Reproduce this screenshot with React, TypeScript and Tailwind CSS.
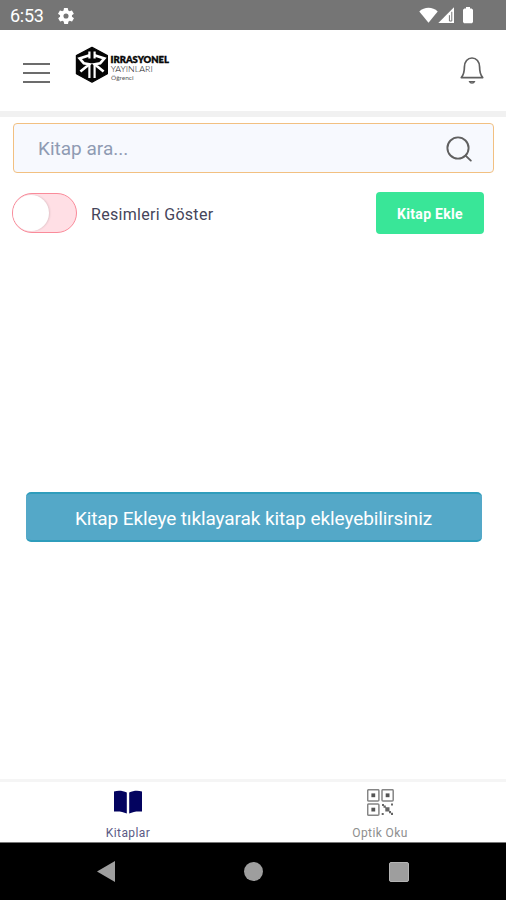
import React from 'react';

const StatusBar = () => {
    return (
        <div className="flex h-[30px] shrink-0 items-center bg-[#757575] text-white">
            <span className="ml-[10px] mt-[2px] w-[48px] text-[18px] leading-none tracking-[-0.3px]">6:53</span>
            <svg width="16" height="16" viewBox="2 2 20 20" className="mt-px" fill="#fff">
                <path d="M19.4 13a7.5 7.5 0 0 0 0-2l2.1-1.6c.2-.2.2-.4.1-.6l-2-3.5c-.1-.2-.4-.3-.6-.2l-2.5 1a7 7 0 0 0-1.7-1l-.4-2.6a.5.5 0 0 0-.5-.5h-4a.5.5 0 0 0-.5.4l-.4 2.7a7 7 0 0 0-1.7 1l-2.5-1c-.2-.1-.5 0-.6.2l-2 3.5c-.1.2-.1.5.1.6L4.6 11a7.5 7.5 0 0 0 0 2l-2.1 1.6c-.2.2-.2.4-.1.6l2 3.5c.1.2.4.3.6.2l2.5-1a7 7 0 0 0 1.7 1l.4 2.6c0 .3.2.5.5.5h4c.2 0 .5-.2.5-.4l.4-2.7a7 7 0 0 0 1.7-1l2.5 1c.2.1.5 0 .6-.2l2-3.5c.1-.2.1-.5-.1-.6zM12 15.2a3.2 3.2 0 1 1 0-6.4 3.2 3.2 0 0 1 0 6.4z" />
            </svg>
            <div className="ml-auto mr-[33px] flex items-center">
                <svg width="19" height="17" viewBox="0 0 19 17" fill="#fff">
                    <path d="M0.3 4.4C5.2-.5 13.8-.5 18.7 4.4L9.5 15.7z" />
                </svg>
                <svg width="17" height="17" viewBox="0 0 17 17">
                    <path d="M16 0.3V16H0.3z" fill="#fff" />
                    <path d="M11.4 8.2v5.8h2.4V4.8" stroke="#757575" strokeWidth="1" fill="none" />
                </svg>
                <svg width="10" height="17" viewBox="0 0 10 17" className="ml-[8px]" fill="#fff">
                    <path d="M3 0h4v1.4h1.6L10 2.8V15L9 16.2H1L0 15V2.8l1.4-1.4H3z" />
                </svg>
            </div>
        </div>
    );
};

const Logo = () => {
    return (
        <svg width="96" height="38" viewBox="0 0 96 38">
            <path d="M17 1.3 32.4 9.6V27.8L17 36.2 1.4 27.8V9.6z" fill="#050505" stroke="#050505" strokeWidth="1.2" strokeLinejoin="round" />
            <g fill="none" stroke="#fff" strokeWidth="2.6">
                <path d="M14.6 9.2 4.6 12.4 8.8 17.2 14.4 18.2 5.4 25.6" />
                <path d="M19.4 9.2 29.4 12.4 25.2 17.2 19.6 18.2 28.6 25.6" />
            </g>
            <path d="M14.4 5.5v7M19.6 5.5v7M14.4 18v14M19.6 18v14" stroke="#fff" strokeWidth="2.2" />
            <text x="35.5" y="17.2" fontSize="8.4" fontWeight="800" fontFamily="Lato" fill="#080808" stroke="#080808" strokeWidth="0.3" textLength="58.5" lengthAdjust="spacingAndGlyphs">IRRASYONEL</text>
            <text x="35.7" y="26" fontSize="7.4" fontWeight="300" fontFamily="Lato" fill="#222" textLength="42" lengthAdjust="spacingAndGlyphs">YAYINLARI</text>
            <text x="36" y="34" fontSize="6" fontFamily="Lato" fill="#555" textLength="22.5" lengthAdjust="spacingAndGlyphs">Öğrenci</text>
        </svg>
    );
};

const Header = () => {
    return (
        <header className="flex h-[87px] shrink-0 items-start border-b-[6px] border-[#f1f1f1] bg-white">
            <button className="ml-[23px] mt-[33px] flex w-[27px] flex-col gap-[7px]">
                <span className="h-[2px] w-full bg-[#6c6c6c]" />
                <span className="h-[2px] w-full bg-[#6c6c6c]" />
                <span className="h-[2px] w-full bg-[#6c6c6c]" />
            </button>
            <div className="ml-[25px] mt-[16px]">
                <Logo />
            </div>
            <svg width="26" height="29" viewBox="0 0 26 29" className="ml-auto mr-[21px] mt-[26px]" fill="none" stroke="#606060" strokeWidth="1.7">
                <path d="M2.3 21.6C5 18.5 5.4 15.5 5.4 11 5.4 5.5 8.6 2 13 2s7.6 3.5 7.6 9c0 4.5.4 7.5 3.1 10.6z" strokeLinejoin="round" />
                <path d="M10.4 25.6c.7 2 4.5 2 5.2 0z" strokeWidth="1.1" />
            </svg>
        </header>
    );
};

const Toggle = () => {
    return (
        <div className="flex h-[40px] w-[65px] items-center rounded-full border-[1.5px] border-[#fa8b9a] bg-[#ffdfe5]">
            <div className="size-[36px] rounded-full bg-white shadow-[1px_0_2px_rgba(0,0,0,0.12)]" />
        </div>
    );
};

const finders = [
    [0.7, 0.7],
    [15, 0.7],
    [0.7, 15],
];

const QrIcon = () => {
    return (
        <svg width="27" height="27" viewBox="0 0 27 27">
            {finders.map(([x, y]) => (
                <g key={`${x}-${y}`}>
                    <rect x={x} y={y} width="11.2" height="11.2" rx="1" fill="none" stroke="#858585" strokeWidth="1.5" />
                    <rect x={x + 3.7} y={y + 3.7} width="3.8" height="3.8" fill="#555" />
                </g>
            ))}
            <path d="M18.3 18.3h4.2v4.2h-4.2zM15 15h2v1.5h1.8v2.3h-2.3V17H15zM24 14.5h2v2h-2zM14.7 24h2v2h-2zM22 22h2v1.8h2v2.2h-2v-1.8h-2z" fill="#666" />
        </svg>
    );
};

const BookIcon = () => {
    return (
        <svg width="30" height="25" viewBox="0 0 30 25" fill="#03035f">
            <path d="M1 1.4C5.3.2 9.8.5 13.8 2.6V23.6C9.8 21.5 5.3 21.1 1 21.6z" />
            <path d="M29 1.4C24.7.2 20.2.5 16.2 2.6V23.6c4-2.1 8.5-2.5 12.8-2z" />
        </svg>
    );
};

const tabs = [
    { title: 'Kitaplar', icon: <BookIcon />, color: 'text-[#5b5b85]' },
    { title: 'Optik Oku', icon: <QrIcon />, color: 'text-[#8e8e8e]' },
];

const TabBar = () => {
    return (
        <nav className="grid h-[63px] shrink-0 grid-cols-2 border-t-[3px] border-[#f5f5f5] bg-white pl-[2px]">
            {tabs.map((tab) => (
                <div key={tab.title} className="flex flex-col items-center pt-[7px]">
                    <div className="flex h-[27px] items-center">{tab.icon}</div>
                    <span className={`mt-[10px] text-[12px] leading-[14px] tracking-[0.4px] ${tab.color}`}>{tab.title}</span>
                </div>
            ))}
        </nav>
    );
};

const NavBar = () => {
    return (
        <div className="flex h-[58px] shrink-0 items-center border-t border-[#777] bg-black">
            <svg width="18" height="22" viewBox="0 0 18 22" className="ml-[97px]" fill="#9e9e9e">
                <path d="M0 10.5 18 0v21z" />
            </svg>
            <div className="ml-[129px] size-[19px] rounded-full bg-[#9e9e9e]" />
            <div className="ml-[126px] size-[20px] rounded-[2px] border border-[#b4b4b4] bg-[#9e9e9e]" />
        </div>
    );
};

const App = () => {
    return (
        <div className="flex h-[900px] w-[506px] flex-col overflow-hidden bg-white font-['Roboto',sans-serif]">
            <StatusBar />
            <Header />
            <main className="flex flex-1 flex-col">
                <div className="ml-[13px] mr-[12px] mt-[6px] flex h-[50px] items-center justify-between rounded-[4px] border-[1.5px] border-[#f2c081] bg-[#f7f9fe] pl-[24px] pr-[21px]">
                    <span className="mt-[2px] text-[19px] text-[#8f9bb3]">Kitap ara...</span>
                    <svg width="26" height="26" viewBox="0 0 26 26" className="mt-px" fill="none" stroke="#606060" strokeWidth="1.9" strokeLinecap="round">
                        <circle cx="12" cy="12" r="10.6" />
                        <path d="M19.6 19.6 24.8 24.6" />
                    </svg>
                </div>
                <div className="ml-[12px] mr-[22px] mt-[19px] flex h-[42px] items-center">
                    <Toggle />
                    <span className="ml-[14px] mt-[3px] text-[16px] tracking-[0.3px] text-[#45455a]">Resimleri Göster</span>
                    <button className="ml-auto h-[42px] w-[108px] rounded-[4px] bg-[#39e698] pt-[2px] text-[14px] font-bold tracking-[0.3px] text-white">Kitap Ekle</button>
                </div>
                <div className="ml-[26px] mr-[24px] mt-[258px] flex h-[50px] items-center justify-center rounded-[5px] border-y-2 border-[#2f9dbc] bg-[#54a8c8] pr-px pt-[4px] text-[19px] tracking-[-0.1px] text-white">
                    Kitap Ekleye tıklayarak kitap ekleyebilirsiniz
                </div>
            </main>
            <TabBar />
            <NavBar />
        </div>
    );
};

export default App;
